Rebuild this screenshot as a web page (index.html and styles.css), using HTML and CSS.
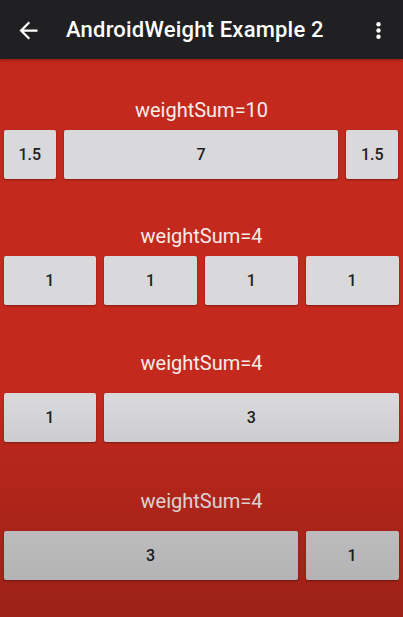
FILE: index.html
```html
<!DOCTYPE html>
<html>
<head>
<meta charset="utf-8">
<link rel="stylesheet" href="styles.css">
</head>
<body>
<div class="screen">
  <header class="appbar">
    <svg class="back" viewBox="0 0 24 24" width="27" height="27"><path fill="#fff" d="M20 11H7.83l5.59-5.59L12 4l-8 8 8 8 1.41-1.41L7.83 13H20v-2z"/></svg>
    <h1 class="title">AndroidWeight Example 2</h1>
    <svg class="more" viewBox="0 0 24 24" width="25" height="25"><circle cx="12" cy="6" r="2.1" fill="#fff"/><circle cx="12" cy="12" r="2.1" fill="#fff"/><circle cx="12" cy="18" r="2.1" fill="#fff"/></svg>
  </header>
  <main class="content">
    <section class="group g1">
      <div class="label">weightSum=10</div>
      <div class="row" style="grid-template-columns:1.5fr 7fr 1.5fr">
        <div class="cell"><button class="btn">1.5</button></div>
        <div class="cell"><button class="btn">7</button></div>
        <div class="cell"><button class="btn">1.5</button></div>
      </div>
    </section>
    <section class="group g2">
      <div class="label">weightSum=4</div>
      <div class="row" style="grid-template-columns:1fr 1fr 1fr 1fr">
        <div class="cell"><button class="btn">1</button></div>
        <div class="cell"><button class="btn">1</button></div>
        <div class="cell"><button class="btn">1</button></div>
        <div class="cell"><button class="btn">1</button></div>
      </div>
    </section>
    <section class="group g3">
      <div class="label">weightSum=4</div>
      <div class="row" style="grid-template-columns:1fr 3fr">
        <div class="cell"><button class="btn">1</button></div>
        <div class="cell"><button class="btn">3</button></div>
      </div>
    </section>
    <section class="group g4">
      <div class="label">weightSum=4</div>
      <div class="row" style="grid-template-columns:3fr 1fr">
        <div class="cell"><button class="btn">3</button></div>
        <div class="cell"><button class="btn">1</button></div>
      </div>
    </section>
    <div class="shade"></div>
  </main>
</div>
</body>
</html>
```

FILE: styles.css
```css
* { box-sizing: border-box; }
html, body {
  margin: 0;
  padding: 0;
  width: 403px;
  height: 617px;
  overflow: hidden;
  background: #c4291d;
  font-family: Roboto, "Noto Sans", "Liberation Sans", sans-serif;
}
.screen {
  position: relative;
  width: 403px;
  height: 617px;
  display: flex;
  flex-direction: column;
}
.appbar {
  position: relative;
  z-index: 2;
  height: 59px;
  flex: 0 0 59px;
  background: #202022;
  display: flex;
  align-items: center;
  box-shadow: 0 1px 3px rgba(0,0,0,0.35);
}
.back {
  margin-left: 15px;
  margin-top: 1px;
  flex: 0 0 auto;
}
.title {
  margin: 0 0 0 24px;
  color: #fff;
  font-size: 22px;
  font-weight: 500;
  letter-spacing: 0.2px;
  flex: 1 1 auto;
  line-height: 24px;
  margin-top: 1px;
}
.more {
  margin-right: 12px;
  flex: 0 0 auto;
  margin-top: 1px;
}
.content {
  position: relative;
  flex: 1 1 auto;
  padding-top: 39px;
}
.label {
  text-align: center;
  color: #f6ecea;
  font-size: 20px;
  line-height: 24px;
  height: 24px;
}
.row {
  display: grid;
  height: 49px;
  margin-top: 8px;
}
.g2 { margin-top: 45px; }
.g3 { margin-top: 46px; }
.g4 { margin-top: 47px; }
.g3 .row, .g4 .row { margin-top: 18px; }
.cell {
  min-width: 0;
  padding: 0 4.5px 0 3.5px;
  display: flex;
}
.btn {
  flex: 1 1 auto;
  border: none;
  border-radius: 2px;
  background: #d9d8da;
  color: #1e1e1e;
  font-family: Roboto, "Noto Sans", "Liberation Sans", sans-serif;
  font-size: 16px;
  font-weight: 500;
  box-shadow: 0 1px 2px rgba(0,0,0,0.35);
  padding: 0;
  height: 49px;
}
.shade {
  position: absolute;
  left: 0;
  right: 0;
  top: 0;
  bottom: 0;
  pointer-events: none;
  background: linear-gradient(to bottom, rgba(0,0,0,0) 0, rgba(0,0,0,0) 340px, rgba(0,0,0,0.08) 400px, rgba(0,0,0,0.2) 558px);
}
```
